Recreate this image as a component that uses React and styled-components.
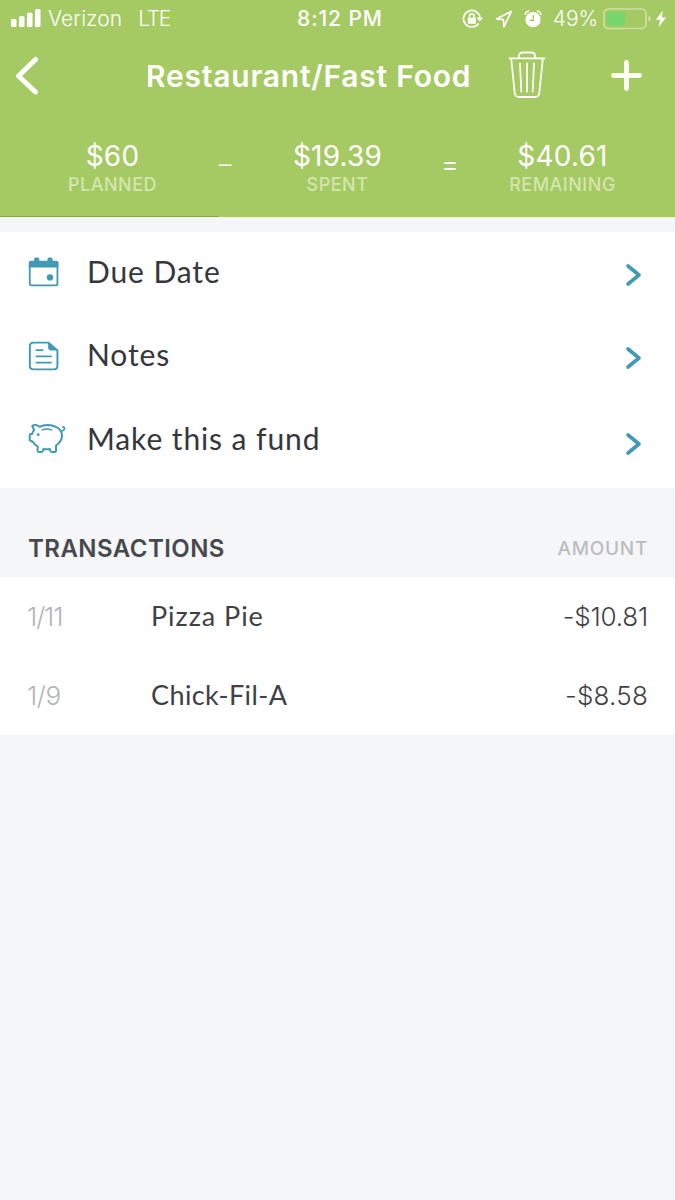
import React from "react";
import styled, { createGlobalStyle } from "styled-components";

const GlobalStyle = createGlobalStyle`
  * {
    box-sizing: border-box;
  }

  body {
    margin: 0;
    background: #f5f6f8;
    font-family: Inter, "Liberation Sans", sans-serif;
  }
`;

const summary = [
  { label: "PLANNED", value: "$60" },
  { label: "SPENT", value: "$19.39" },
  { label: "REMAINING", value: "$40.61" },
];

const transactions = [
  { id: 1, date: "1/11", name: "Pizza Pie", amount: "-$10.81", nameGap: 0.95, dateGap: -1.1, amountGap: -0.2 },
  { id: 2, date: "1/9", name: "Chick-Fil-A", amount: "-$8.58", nameGap: 0.4, dateGap: -0.4, amountGap: 0.2 },
];

// Styled Components
const Screen = styled.main`
  width: 675px;
  min-height: 1200px;
  background: #f5f6f8;
`;

const Header = styled.header`
  display: flex;
  flex-direction: column;
  height: 217px;
  background: #a5ca64;
  color: #fff;
`;

const StatusBar = styled.div`
  display: grid;
  grid-template-columns: 1fr auto 1fr;
  align-items: center;
  height: 37px;
  padding: 0 8px 0 10px;
  line-height: 37px;
`;

const StatusGroup = styled.div`
  display: flex;
  align-items: center;
  justify-content: ${(props) => (props.$end ? "flex-end" : "flex-start")};
`;

const StatusText = styled.span`
  font-size: 21px;
  font-weight: ${(props) => props.$weight || 350};
  letter-spacing: ${(props) => props.$gap || 0}px;
  margin-left: ${(props) => props.$left || 0}px;
  white-space: nowrap;
`;

const StatusIcon = styled.svg`
  flex: none;
  margin-left: ${(props) => props.$left || 0}px;
`;

const NavBar = styled.nav`
  display: flex;
  align-items: center;
  height: 78px;
  padding: 0 32px 0 15px;
`;

const Title = styled.h1`
  width: 326px;
  margin: 0 36px 0 107px;
  font-size: 30px;
  font-weight: 600;
  line-height: 40px;
  letter-spacing: 0.78px;
  white-space: nowrap;
`;

const IconButton = styled.button`
  display: flex;
  flex: none;
  padding: 0;
  border: none;
  background: none;
  color: inherit;
  margin-left: ${(props) => props.$left || 0}px;
  margin-bottom: ${(props) => props.$bottom || 0}px;
`;

const Summary = styled.div`
  display: grid;
  grid-template-columns: 211px 14px 211px 14px 211px;
  justify-content: center;
  padding-top: 24px;
  height: 101px;
`;

const SummaryItem = styled.div`
  text-align: center;
`;

const SummaryValue = styled.div`
  font-size: 28px;
  line-height: 34px;
  letter-spacing: 0.2px;
`;

const SummaryLabel = styled.div`
  margin-top: 3px;
  font-size: 18px;
  font-weight: 500;
  line-height: 18px;
  letter-spacing: 0.5px;
  color: #d3e6ae;
`;

const Operator = styled.div`
  display: flex;
  justify-content: center;
  font-size: ${(props) => props.$size}px;
  font-weight: 300;
  line-height: 51px;
`;

const Progress = styled.div`
  height: 1px;
  width: 218px;
  background: #84a150;
`;

const Options = styled.section`
  height: 256px;
  margin-top: 15px;
  background: #fff;
`;

const Option = styled.div`
  display: flex;
  align-items: center;
  height: ${(props) => props.$height}px;
  padding: 0 32px 0 28px;
  color: #4299b3;
`;

const OptionIcon = styled.svg`
  flex: none;
  margin-top: ${(props) => props.$top || 0}px;
`;

const OptionLabel = styled.span`
  flex: 1;
  margin-left: 19px;
  padding-bottom: 2px;
  font-family: Lato, sans-serif;
  font-size: 30px;
  line-height: 36px;
  letter-spacing: 0.9px;
  color: #34373c;
`;

const ListHeader = styled.div`
  display: flex;
  align-items: center;
  justify-content: space-between;
  height: 89px;
  padding: 31px 27px 0 28px;
`;

const ListTitle = styled.h2`
  margin: 0;
  font-size: 24px;
  font-weight: 600;
  letter-spacing: 0.45px;
  color: #47494d;
`;

const ListColumn = styled.span`
  font-size: 19px;
  font-weight: 500;
  letter-spacing: 0.7px;
  color: #bcbdc0;
`;

const TransactionRow = styled.div`
  display: grid;
  grid-template-columns: 124px 1fr auto;
  align-items: center;
  height: 79px;
  padding: 0 27px 1px;
  background: #fff;
  color: #3f4145;
`;

const TransactionDate = styled.span`
  font-size: 26px;
  font-weight: 300;
  letter-spacing: ${(props) => props.$gap}px;
  color: #b3b4b7;
`;

const TransactionName = styled.span`
  padding-bottom: 1px;
  font-family: Lato, sans-serif;
  font-size: 27px;
  letter-spacing: ${(props) => props.$gap}px;
`;

const TransactionAmount = styled.span`
  font-size: 26px;
  font-weight: 350;
  letter-spacing: ${(props) => props.$gap}px;
`;

const Chevron = ({ top }) => (
  <OptionIcon $top={top} width="18" height="24" viewBox="0 0 18 24">
    <path
      d="M3 3l11 9L3 21"
      fill="none"
      stroke="currentColor"
      strokeWidth="3.6"
      strokeLinecap="round"
      strokeLinejoin="round"
    />
  </OptionIcon>
);

const CalendarIcon = () => (
  <OptionIcon width="40" height="30" viewBox="0 0 39 30" preserveAspectRatio="none">
    <rect x="1.7" y="4.7" width="27" height="23.6" rx="1.6" fill="none" stroke="currentColor" strokeWidth="1.8" />
    <path
      d="M.8 5.5Q.8 4 2.3 4H6V2Q6 .5 7.5 .5h2Q11 .5 11 2v2h8V2Q19 .5 20.5 .5h2Q24 .5 24 2v2h4.100q1.500 0 1.500 1.500v5H.8z"
      fill="currentColor"
    />
    <circle cx="21.4" cy="20.4" r="3.1" fill="currentColor" />
  </OptionIcon>
);

const NotesIcon = () => (
  <OptionIcon $top={3} width="40" height="30" viewBox="0 0 39 30" preserveAspectRatio="none">
    <path
      d="M20 1.6H5.500q-3.700 0-3.700 3.700v19.400q0 3.700 3.700 3.700H25q3.700 0 3.700-3.700V9.500z"
      fill="none"
      stroke="currentColor"
      strokeWidth="1.9"
      strokeLinejoin="round"
    />
    <path d="M19.600 1.300v5.200q0 3 3 3h6.600z" fill="currentColor" />
    <path d="M8.200 9.200h6M8.200 15.400h14.200M8.200 21.600h14.200" stroke="currentColor" strokeWidth="1.8" strokeLinecap="round" />
  </OptionIcon>
);

const PigIcon = () => (
  <OptionIcon width="40" height="32" viewBox="0 0 40 32">
    <g fill="none" stroke="currentColor" strokeWidth="2" strokeLinecap="round" strokeLinejoin="round">
      <path d="M11.500 3.800C9.600 2.200 7 1.800 5 2.400c-.8.300-.8 1-.4 1.700l1.500 2.700c-1.100 1.500-1.600 2.700-2.100 4.300H2.800c-.8 0-1.100.5-1.100 1.300v4.100c0 .8.300 1.300 1.100 1.500l2.100.8c1.100 2.300 2.700 3.700 4.900 4.900l-.3 3.400c-.1 1.300.6 2 1.800 2h1.800c1.100 0 1.700-.6 2-1.600l.5-1.600c1.900.4 4.200.4 6.200 0l.4 1.600c.3 1.100.9 1.600 2 1.600H26.200c1.200 0 1.800-.7 1.800-1.900v-4.700c4-2.600 6-5.700 6-9.900C34 5.800 27 2 19.500 2c-3 0-5.700.6-8 1.800z" />
      <path d="M14.300 6.900c3-1.200 6.300-1.200 9.300 0" strokeWidth="1.500" />
      <path d="M33 8c1.800.1 3.200-.8 3.500-2.300.2-1.200-.7-2-1.700-1.700" strokeWidth="1.700" />
    </g>
    <circle cx="10.200" cy="11.700" r="1.400" fill="currentColor" />
  </OptionIcon>
);

const SignalIcon = () => (
  <StatusIcon width="32" height="20" viewBox="0 0 32 20" fill="currentColor">
    <rect x="1" y="10" width="5.5" height="8" rx="1.6" />
    <rect x="9" y="7" width="5.5" height="11" rx="1.6" />
    <rect x="17" y="3.6" width="5.5" height="14.400" rx="1.6" />
    <rect x="25" y="0" width="5.5" height="18" rx="1.6" />
  </StatusIcon>
);

const LockIcon = () => (
  <StatusIcon width="22" height="20" viewBox="0 0 22 20">
    <path d="M16.600 14.500A8.300 8.300 0 1 1 18 8.500" fill="none" stroke="currentColor" strokeWidth="1.6" />
    <path d="M14.600 8.600h6.400l-3.200 4z" fill="currentColor" />
    <rect x="5.800" y="8.800" width="8" height="6" rx=".8" fill="currentColor" />
    <path d="M7.400 9V7.200a2.400 2.400 0 0 1 4.800 0V9" fill="none" stroke="currentColor" strokeWidth="1.5" />
  </StatusIcon>
);

const LocationIcon = () => (
  <StatusIcon $left={11} width="18" height="18" viewBox="0 0 18 18">
    <path d="M16.300 1.400L1.500 8.900l6.900.8.600 7z" fill="none" stroke="currentColor" strokeWidth="1.7" strokeLinejoin="round" />
  </StatusIcon>
);

const AlarmIcon = () => (
  <StatusIcon $left={11} width="18" height="18" viewBox="0 0 18 18">
    <circle cx="9" cy="9.700" r="7.600" fill="currentColor" />
    <path d="M1 4.200Q1.800 1.700 4.600 1M17 4.200Q16.200 1.700 13.400 1" fill="none" stroke="currentColor" strokeWidth="1.5" strokeLinecap="round" />
    <path d="M9.400 5v5.200H5.800" fill="none" stroke="#a5ca64" strokeWidth="1.4" />
  </StatusIcon>
);

const BatteryIcon = () => (
  <StatusIcon $left={5} width="49" height="22" viewBox="0 0 49 22">
    <rect x="1" y="1" width="42" height="19.5" rx="4.5" fill="none" stroke="#cce0a2" strokeWidth="1.7" />
    <rect x="4" y="4" width="18" height="13.5" rx="1.5" fill="#75d76d" />
    <path d="M45.300 7.500q2.500 1 2.500 3.300t-2.500 3.300z" fill="#cce0a2" />
  </StatusIcon>
);

const BoltIcon = () => (
  <StatusIcon $left={3} width="12" height="18" viewBox="0 0 12 18">
    <path d="M8 .5L.8 9.800h4.400L3.400 17.300 11.200 7.600H6.700z" fill="currentColor" />
  </StatusIcon>
);

const App = () => {
  return (
    <Screen>
      <GlobalStyle />
      <Header>
        <StatusBar>
          <StatusGroup>
            <SignalIcon />
            <StatusText $left={6} $gap={0.05}>Verizon</StatusText>
            <StatusText $left={16} $gap={-1.3}>LTE</StatusText>
          </StatusGroup>
          <StatusText $weight={500} $gap={0.9} $left={3}>8:12 PM</StatusText>
          <StatusGroup $end>
            <LockIcon />
            <LocationIcon />
            <AlarmIcon />
            <StatusText $left={11} $gap={-0.1}>49%</StatusText>
            <BatteryIcon />
            <BoltIcon />
          </StatusGroup>
        </StatusBar>

        <NavBar>
          <IconButton aria-label="Back">
            <svg width="24" height="40" viewBox="0 0 24 40">
              <path d="M20.500 3.500L3.500 20l17 16" fill="none" stroke="currentColor" strokeWidth="5" strokeLinecap="round" strokeLinejoin="round" />
            </svg>
          </IconButton>
          <Title>Restaurant/Fast Food</Title>
          <IconButton aria-label="Delete" $bottom={3}>
            <svg width="38" height="48" viewBox="0 0 38 48" fill="none" stroke="currentColor" strokeWidth="1.8" strokeLinecap="round" strokeLinejoin="round">
              <path d="M1.500 7.300h35M3.200 7.500l3.500 34.500q.5 4 4.300 4h16q3.800 0 4.300-4L34.800 7.500M11 7V5q0-3.500 3.500-3.500h9Q27 1.500 27 5v2" />
              <path d="M12 12.500l1.300 28M19 12.500v28M26 12.500l-1.300 28" />
            </svg>
          </IconButton>
          <IconButton aria-label="Add" $left={64} $bottom={1}>
            <svg width="32" height="32" viewBox="0 0 32 32">
              <path d="M16.500 2.500v26M3.500 15.500h26" stroke="currentColor" strokeWidth="4.8" strokeLinecap="round" />
            </svg>
          </IconButton>
        </NavBar>

        <Summary>
          {summary.map((item, index) => (
            <React.Fragment key={item.label}>
              {index > 0 && <Operator $size={index === 1 ? 25 : 28}>{index === 1 ? "–" : "="}</Operator>}
              <SummaryItem>
                <SummaryValue>{item.value}</SummaryValue>
                <SummaryLabel>{item.label}</SummaryLabel>
              </SummaryItem>
            </React.Fragment>
          ))}
        </Summary>
        <Progress />
      </Header>

      <Options>
        <Option $height={80}>
          <CalendarIcon />
          <OptionLabel>Due Date</OptionLabel>
          <Chevron top={6} />
        </Option>
        <Option $height={85}>
          <NotesIcon />
          <OptionLabel>Notes</OptionLabel>
          <Chevron top={7} />
        </Option>
        <Option $height={83}>
          <PigIcon />
          <OptionLabel>Make this a fund</OptionLabel>
          <Chevron top={11} />
        </Option>
      </Options>

      <ListHeader>
        <ListTitle>TRANSACTIONS</ListTitle>
        <ListColumn>AMOUNT</ListColumn>
      </ListHeader>
      {transactions.map((item) => (
        <TransactionRow key={item.id}>
          <TransactionDate $gap={item.dateGap}>{item.date}</TransactionDate>
          <TransactionName $gap={item.nameGap}>{item.name}</TransactionName>
          <TransactionAmount $gap={item.amountGap}>{item.amount}</TransactionAmount>
        </TransactionRow>
      ))}
    </Screen>
  );
};

export default App;
